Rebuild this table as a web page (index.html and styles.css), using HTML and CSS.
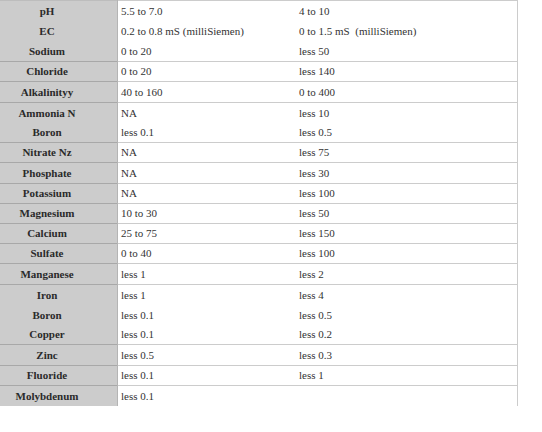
FILE: index.html
```html
<!DOCTYPE html>
<html>
<head>
<meta charset="utf-8">
<link rel="stylesheet" href="styles.css">
</head>
<body>
<table class="water">
  <tr class="h20 top"><th>pH</th><td>5.5 to 7.0</td><td>4 to 10</td></tr>
  <tr class="h20"><th>EC</th><td>0.2 to 0.8 mS (milliSiemen)</td><td>0 to 1.5 mS&nbsp; (milliSiemen)</td></tr>
  <tr class="h20"><th>Sodium</th><td>0 to 20</td><td>less 50</td></tr>
  <tr class="h19 sep"><th>Chloride</th><td>0 to 20</td><td>less 140</td></tr>
  <tr class="h20 sep"><th>Alkalinityy</th><td>40 to 160</td><td>0 to 400</td></tr>
  <tr class="h20 sep"><th>Ammonia N</th><td>NA</td><td>less 10</td></tr>
  <tr class="h19"><th>Boron</th><td>less 0.1</td><td>less 0.5</td></tr>
  <tr class="h19 sep"><th>Nitrate Nz</th><td>NA</td><td>less 75</td></tr>
  <tr class="h20 sep"><th>Phosphate</th><td>NA</td><td>less 30</td></tr>
  <tr class="h19 sep"><th>Potassium</th><td>NA</td><td>less 100</td></tr>
  <tr class="h19 sep"><th>Magnesium</th><td>10 to 30</td><td>less 50</td></tr>
  <tr class="h19 sep"><th>Calcium</th><td>25 to 75</td><td>less 150</td></tr>
  <tr class="h19 sep"><th>Sulfate</th><td>0 to 40</td><td>less 100</td></tr>
  <tr class="h20 sep"><th>Manganese</th><td>less 1</td><td>less 2</td></tr>
  <tr class="h20 sep"><th>Iron</th><td>less 1</td><td>less 4</td></tr>
  <tr class="h20"><th>Boron</th><td>less 0.1</td><td>less 0.5</td></tr>
  <tr class="h19"><th>Copper</th><td>less 0.1</td><td>less 0.2</td></tr>
  <tr class="h20 sep"><th>Zinc</th><td>less 0.5</td><td>less 0.3</td></tr>
  <tr class="h19 sep"><th>Fluoride</th><td>less 0.1</td><td>less 1</td></tr>
  <tr class="h20 sep"><th>Molybdenum</th><td>less 0.1</td><td></td></tr>
</table>
</body>
</html>
```
FILE: styles.css
```css
html, body {
  margin: 0;
  padding: 0;
  background: #ffffff;
}

.water {
  border-collapse: collapse;
  border-spacing: 0;
  width: 518px;
  table-layout: fixed;
  font-family: "Liberation Serif", "Times New Roman", serif;
  font-size: 11px;
  color: #333333;
  border-right: 1px solid #cccccc;
}

.water th,
.water td {
  padding: 0;
  vertical-align: middle;
  white-space: nowrap;
  line-height: 13px;
}

.water th {
  width: 94px;
  padding-right: 23px;
  background: #cccccc;
  border-right: 1px solid #b4b4b4;
  font-weight: bold;
  text-align: center;
  color: #2a2a2a;
}

.water td {
  text-align: left;
  padding-left: 3px;
}

.water td:nth-child(2) {
  width: 174px;
}

.water td:nth-child(3) {
  padding-left: 4px;
}

.water tr.h20 th,
.water tr.h20 td {
  height: 20px;
}

.water tr.h19 th,
.water tr.h19 td {
  height: 19px;
}

.water tr.top td {
  border-top: 1px solid #cccccc;
}

.water tr.top th {
  border-top: 1px solid #bdbdbd;
}

.water tr.sep td {
  border-top: 1px solid #cccccc;
}

.water tr.sep th {
  border-top: 1px solid #a8a8a8;
}
```
